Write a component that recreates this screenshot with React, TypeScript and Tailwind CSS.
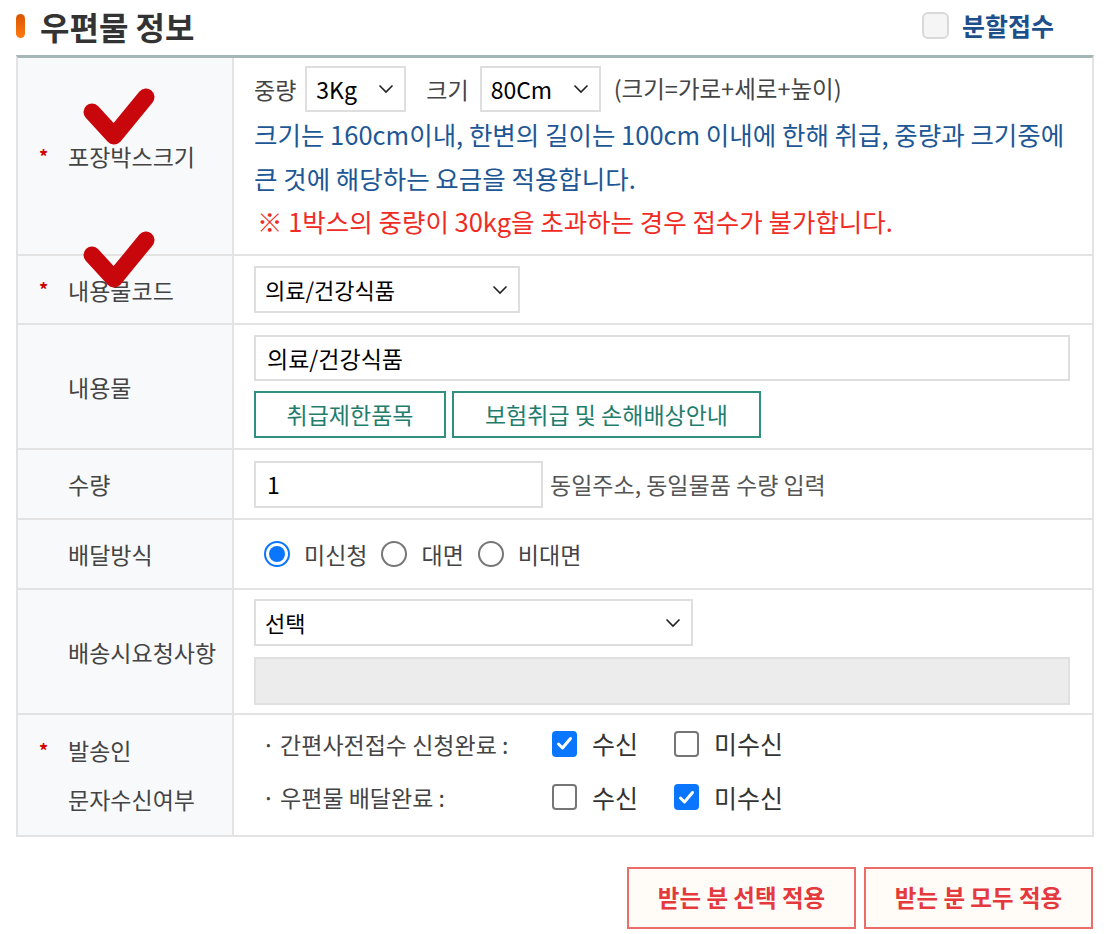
import React from "react";

const font = { fontFamily: '"Noto Sans CJK KR", "Noto Sans", sans-serif' };

function Chevron() {
  return (
    <svg
      className="pointer-events-none absolute right-3 top-1/2 -translate-y-1/2"
      width="16"
      height="10"
      viewBox="0 0 16 10"
      fill="none"
    >
      <path d="M1.5 1.5 8 8l6.5-6.5" stroke="#222" strokeWidth="1.6" />
    </svg>
  );
}

function Select({ value, className, text = "text-[22px]" }: { value: string; className: string; text?: string }) {
  return (
    <div className={`relative ${className}`}>
      <select
        defaultValue={value}
        className={`h-full w-full appearance-none border-2 border-[#dedede] bg-white pl-[9px] text-black outline-none ${text}`}
      >
        <option>{value}</option>
      </select>
      <Chevron />
    </div>
  );
}

function Radio({ checked, label }: { checked?: boolean; label: string }) {
  return (
    <label className="flex items-center gap-[14px]">
      {checked ? (
        <span className="flex h-[26px] w-[26px] items-center justify-center rounded-full border-2 border-[#0a75ff]">
          <span className="h-[16px] w-[16px] rounded-full bg-[#0a75ff]" />
        </span>
      ) : (
        <span className="h-[26px] w-[26px] rounded-full border-2 border-[#767676]" />
      )}
      <span className="text-[23px] text-[#444]">{label}</span>
    </label>
  );
}

function Check({ checked, label }: { checked?: boolean; label: string }) {
  return (
    <label className="flex items-center gap-[15px]">
      {checked ? (
        <span className="flex h-[26px] w-[25px] items-center justify-center rounded-[4px] bg-[#0a75ff]">
          <svg width="17" height="15" viewBox="0 0 17 15" fill="none">
            <path d="M2.5 8 6.5 12 14.5 2.5" stroke="#fff" strokeWidth="3" strokeLinecap="round" strokeLinejoin="round" />
          </svg>
        </span>
      ) : (
        <span className="h-[26px] w-[25px] rounded-[4px] border-2 border-[#767676]" />
      )}
      <span className="text-[25px] text-[#333]">{label}</span>
    </label>
  );
}

function Star() {
  return <span className="inline-block w-[50px] pl-[21px] text-[18px] font-bold text-[#d00000]">*</span>;
}

function Row({
  label,
  required,
  height,
  children,
  last,
}: {
  label: React.ReactNode;
  required?: boolean;
  height: string;
  children: React.ReactNode;
  last?: boolean;
}) {
  return (
    <div className={`flex ${height} ${last ? "" : "border-b-2 border-[#e3e3e3]"}`}>
      <div className="flex w-[216px] shrink-0 items-center border-r-2 border-[#e3e3e3] bg-[#f8f9fa]">
        {typeof label === "string" ? (
          <>
            <span className="inline-block w-[50px] pl-[21px] text-[18px] font-bold text-[#d00000]">{required ? "*" : ""}</span>
            <div className="text-[23px] leading-[50px] text-[#444]">{label}</div>
          </>
        ) : (
          label
        )}
      </div>
      <div className="flex-1 px-[20px]">{children}</div>
    </div>
  );
}

function RedTick({ className }: { className: string }) {
  return (
    <svg className={`pointer-events-none absolute ${className}`} width="80" height="62" viewBox="0 0 80 62" fill="none">
      <path d="M12 26 34 50 66 11" stroke="#c8070c" strokeWidth="17" strokeLinecap="round" strokeLinejoin="round" />
    </svg>
  );
}

export default function App() {
  return (
    <div className="min-h-[934px] bg-white" style={font}>
      <div className="relative px-[16px]">
        <div className="flex h-[55px] items-center justify-between pb-[4px]">
          <div className="flex items-center gap-[15px]">
            <span className="h-[24px] w-[9px] rounded-full bg-gradient-to-b from-[#d95400] to-[#ff7a10]" />
            <h2 className="text-[32px] font-bold text-[#333]">우편물 정보</h2>
          </div>
          <label className="mr-[40px] flex items-center gap-[13px]">
            <span className="h-[27px] w-[27px] rounded-[6px] border-2 border-[#d9d9d9] bg-[#f5f5f5]" />
            <span className="text-[25px] font-bold text-[#1d4f8a]">분할접수</span>
          </label>
        </div>

        <div className="border-2 border-t-[3px] border-[#e3e3e3] border-t-[#a4b6b5]">
          <Row label="포장박스크기" required height="h-[198px]">
            <div className="pt-[8px]">
              <div className="flex h-[46px] items-center">
                <span className="mr-[9px] text-[23px] text-[#444]">중량</span>
                <Select value="3Kg" className="h-[46px] w-[101px]" text="text-[23px]" />
                <span className="ml-[20px] mr-[11px] text-[23px] text-[#444]">크기</span>
                <Select value="80Cm" className="h-[46px] w-[121px]" text="text-[23px]" />
                <span className="ml-[13px] text-[23.5px] text-[#444]">(크기=가로+세로+높이)</span>
              </div>
              <p className="text-[25.5px] leading-[44px] text-[#1d5795]">
                크기는 160cm이내, 한변의 길이는 100cm 이내에 한해 취급, 중량과 크기중에
                <br />큰 것에 해당하는 요금을 적용합니다.
              </p>
              <p className="pl-[3px] text-[25.5px] leading-[42px] text-[#ef2b24]">
                ※ 1박스의 중량이 30kg을 초과하는 경우 접수가 불가합니다.
              </p>
            </div>
          </Row>
          <Row label="내용물코드" required height="h-[69px]">
            <div className="flex h-full items-center">
              <Select value="의료/건강식품" className="h-[47px] w-[266px]" />
            </div>
          </Row>
          <Row label="내용물" height="h-[125px]">
            <div className="flex flex-col gap-[10px] pr-[2px] pt-[10px]">
              <input
                defaultValue="의료/건강식품"
                className="h-[46px] w-full border-2 border-[#dedede] px-[11px] text-[23px] text-black outline-none"
              />
              <div className="flex gap-[6px]">
                <button className="h-[47px] w-[192px] border-2 border-[#2f8f80] text-[23px] text-[#1f7d6d]">취급제한품목</button>
                <button className="h-[47px] w-[309px] border-2 border-[#2f8f80] text-[23px] text-[#1f7d6d]">보험취급 및 손해배상안내</button>
              </div>
            </div>
          </Row>
          <Row label="수량" height="h-[70px]">
            <div className="flex h-full items-center gap-[7px]">
              <input
                defaultValue="1"
                className="h-[47px] w-[289px] border-2 border-[#dedede] px-[11px] text-[23px] text-black outline-none"
              />
              <span className="text-[23px] text-[#555]">동일주소, 동일물품 수량 입력</span>
            </div>
          </Row>
          <Row label="배달방식" height="h-[70px]">
            <div className="flex h-full items-center gap-[14px] pl-[10px]">
              <Radio checked label="미신청" />
              <Radio label="대면" />
              <Radio label="비대면" />
            </div>
          </Row>
          <Row label="배송시요청사항" height="h-[125px]">
            <div className="flex flex-col gap-[11px] pr-[2px] pt-[9px]">
              <Select value="선택" className="h-[47px] w-[439px]" />
              <div className="h-[48px] w-full border-2 border-[#e0e0e0] bg-[#ececec]" />
            </div>
          </Row>
          <Row
            label={
              <div className="text-[23px] leading-[49px] text-[#444]">
                <div className="flex items-center">
                  <Star />
                  <span>발송인</span>
                </div>
                <div className="pl-[50px]">문자수신여부</div>
              </div>
            }
            height="h-[120px]"
            last
          >
            <div className="flex flex-col gap-[16px] pl-[8px] pt-[10px]">
              <div className="flex items-center">
                <span className="w-[290px] text-[23px] text-[#444]">· 간편사전접수 신청완료 :</span>
                <div className="flex gap-[36px]">
                  <Check checked label="수신" />
                  <Check label="미수신" />
                </div>
              </div>
              <div className="flex items-center">
                <span className="w-[290px] text-[23px] text-[#444]">· 우편물 배달완료 :</span>
                <div className="flex gap-[36px]">
                  <Check label="수신" />
                  <Check checked label="미수신" />
                </div>
              </div>
            </div>
          </Row>
        </div>

        <div className="mt-[30px] flex justify-end gap-[8px] pr-[1px]">
          <button className="h-[62px] w-[229px] border-2 border-[#ec6c6a] bg-[#fffcf8] text-[23.5px] font-bold text-[#e4393d]">받는 분 선택 적용</button>
          <button className="h-[62px] w-[229px] border-2 border-[#ec6c6a] bg-[#fffcf8] text-[23.5px] font-bold text-[#e4393d]">받는 분 모두 적용</button>
        </div>

        <RedTick className="left-[80px] top-[86px]" />
        <RedTick className="left-[80px] top-[229px]" />
      </div>
    </div>
  );
}
